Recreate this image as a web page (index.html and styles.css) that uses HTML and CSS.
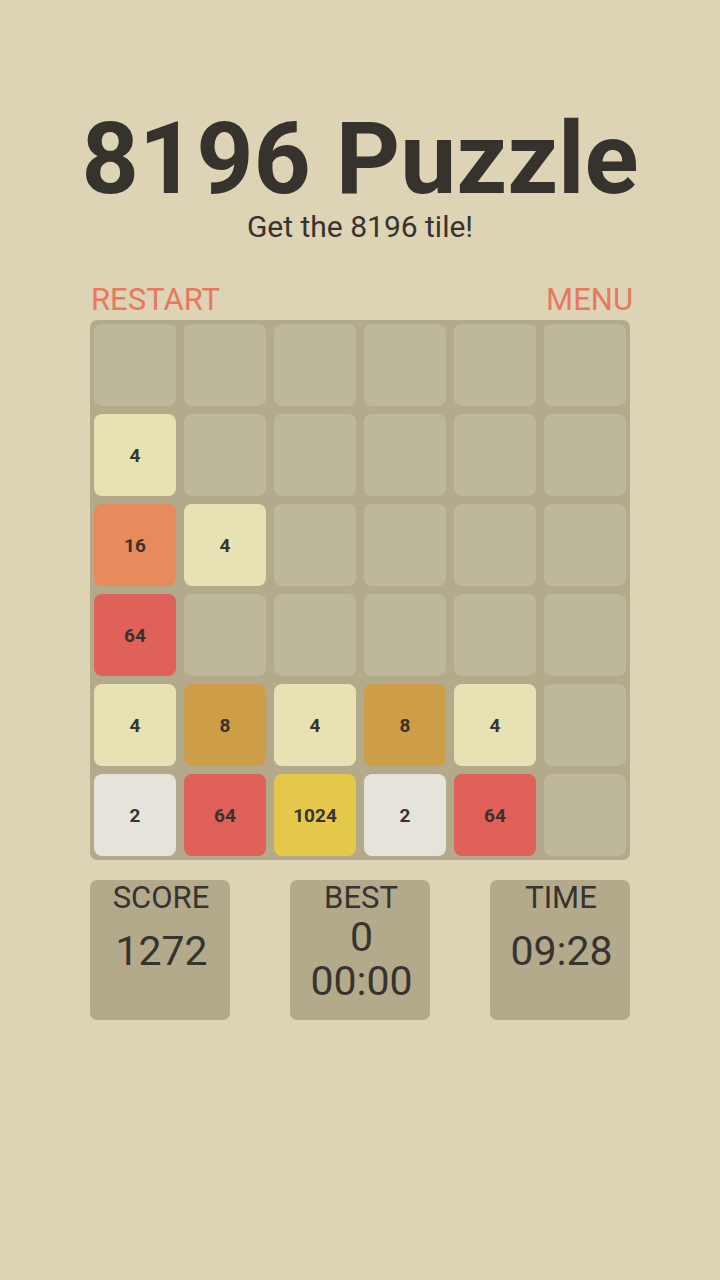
FILE: index.html
```html
<!DOCTYPE html>
<html>
<head>
<meta charset="utf-8">
<link rel="stylesheet" href="styles.css">
</head>
<body>
<div class="page">
  <h1 class="title">8196 Puzzle</h1>
  <p class="subtitle">Get the 8196 tile!</p>
  <div class="actions">
    <span class="action">RESTART</span>
    <span class="action">MENU</span>
  </div>
  <div class="board">
    <div class="cell"></div><div class="cell"></div><div class="cell"></div><div class="cell"></div><div class="cell"></div><div class="cell"></div>
    <div class="cell t4">4</div><div class="cell"></div><div class="cell"></div><div class="cell"></div><div class="cell"></div><div class="cell"></div>
    <div class="cell t16">16</div><div class="cell t4">4</div><div class="cell"></div><div class="cell"></div><div class="cell"></div><div class="cell"></div>
    <div class="cell t64">64</div><div class="cell"></div><div class="cell"></div><div class="cell"></div><div class="cell"></div><div class="cell"></div>
    <div class="cell t4">4</div><div class="cell t8">8</div><div class="cell t4">4</div><div class="cell t8">8</div><div class="cell t4">4</div><div class="cell"></div>
    <div class="cell t2">2</div><div class="cell t64">64</div><div class="cell t1024">1024</div><div class="cell t2">2</div><div class="cell t64">64</div><div class="cell"></div>
  </div>
  <div class="stats">
    <div class="stat">
      <div class="stat-label">SCORE</div>
      <div class="stat-value">1272</div>
    </div>
    <div class="stat">
      <div class="stat-label">BEST</div>
      <div class="stat-value best">0<br>00:00</div>
    </div>
    <div class="stat">
      <div class="stat-label">TIME</div>
      <div class="stat-value">09:28</div>
    </div>
  </div>
</div>
</body>
</html>
```
FILE: styles.css
```css
html, body {
  margin: 0;
  padding: 0;
  background: #ddd3b5;
}
body {
  font-family: Roboto, "Liberation Sans", sans-serif;
  color: #37332e;
  width: 720px;
  height: 1280px;
}
.page {
  display: flex;
  flex-direction: column;
  align-items: center;
  padding-top: 109px;
}
.title {
  margin: 0;
  font-size: 100px;
  line-height: 100px;
  font-weight: 700;
  color: #36322d;
}
.subtitle {
  margin: 3px 0 0;
  font-size: 30px;
  line-height: 30px;
  font-weight: 400;
}
.actions {
  width: 542px;
  margin: 43px 0 0 4px;
  display: flex;
  justify-content: space-between;
  height: 35px;
}
.action {
  font-size: 31px;
  line-height: 30px;
  color: #e8795f;
}
.board {
  width: 540px;
  box-sizing: border-box;
  padding: 4px;
  background: #b3aa8b;
  border-radius: 7px;
  display: grid;
  grid-template-columns: repeat(6, 82px);
  grid-auto-rows: 82px;
  gap: 8px;
}
.cell {
  background: #bdb89b;
  border-radius: 8px;
  display: flex;
  align-items: center;
  justify-content: center;
  font-size: 19px;
  font-weight: 700;
  color: #37332e;
}
.t2 { background: #e6e4da; }
.t4 { background: #e6e2b4; }
.t8 { background: #ce9d48; }
.t16 { background: #e88b5c; }
.t64 { background: #e0605a; }
.t1024 { background: #e4c84a; }
.stats {
  width: 540px;
  margin-top: 20px;
  display: flex;
  justify-content: space-between;
}
.stat {
  width: 140px;
  height: 140px;
  background: #b3aa8b;
  border-radius: 7px;
  box-sizing: border-box;
  padding-top: 3px;
  text-align: center;
}
.stat-label {
  font-size: 31px;
  line-height: 30px;
  padding-left: 2px;
}
.stat-value {
  margin-top: 14px;
  font-size: 41px;
  line-height: 48px;
  padding-left: 3px;
}
.stat-value.best {
  margin-top: 2px;
  line-height: 44px;
}
```
